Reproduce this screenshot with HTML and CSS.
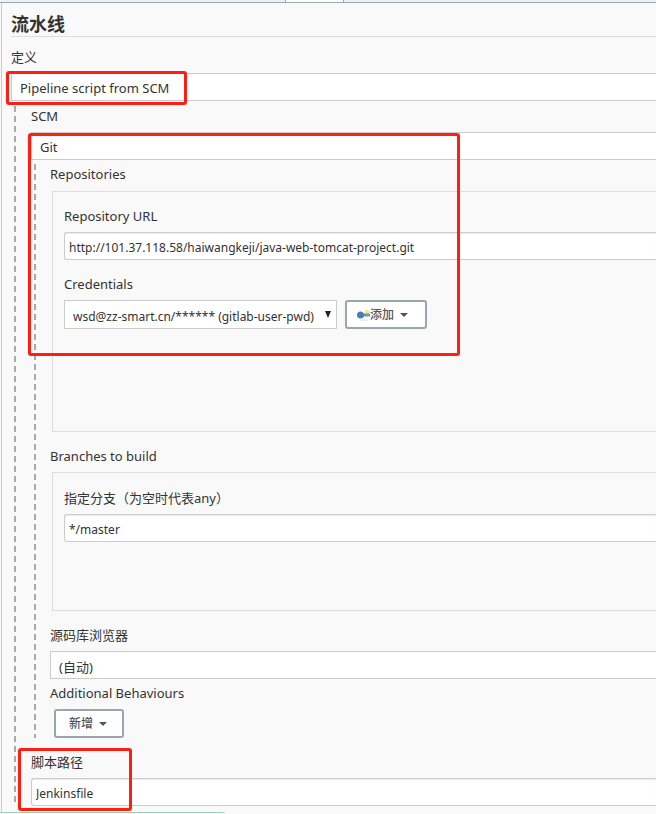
FILE: index.html
```html
<!DOCTYPE html>
<html lang="zh-CN">
<head>
    <meta charset="UTF-8">
    <meta name="viewport" content="width=device-width, initial-scale=1.0">
    <title>流水线</title>
    <link rel="stylesheet" href="styles.css">
</head>
<body>
    <div class="tab-bar">
        <div class="tab active"></div>
    </div>
    <form class="panel">
        <h2>流水线</h2>
        <label class="first" for="definition">定义</label>
        <select id="definition">
            <option>Pipeline script from SCM</option>
        </select>
        <div class="nested">
            <label for="scm">SCM</label>
            <select id="scm">
                <option>Git</option>
            </select>
            <div class="nested inner">
                <h3>Repositories</h3>
                <div class="group repositories">
                    <label for="repo-url">Repository URL</label>
                    <input type="text" id="repo-url" value="http://101.37.118.58/haiwangkeji/java-web-tomcat-project.git">
                    <label class="spaced" for="credentials">Credentials</label>
                    <div class="credentials-row">
                        <div class="select-box">
                            <select id="credentials">
                                <option>wsd@zz-smart.cn/****** (gitlab-user-pwd)</option>
                            </select>
                            <svg class="arrow" width="6" height="7" viewBox="0 0 6 7"><path d="M0 0h6L3 7z" fill="#222"/></svg>
                        </div>
                        <button type="button" class="add">
                            <svg width="13" height="14" viewBox="0 0 13 14">
                                <ellipse cx="7" cy="12" rx="5" ry="1" fill="#eceef0"/>
                                <circle cx="10" cy="4" r="2.500" fill="#f5ee70"/>
                                <path d="M5 5.500h8v3H5z" fill="#6f98c8"/>
                                <circle cx="3.500" cy="7" r="3.500" fill="#4a7cb8"/>
                            </svg>
                            <span>添加</span>
                            <svg class="caret" width="8" height="4" viewBox="0 0 8 4"><path d="M0 0h8L4 4z" fill="#4d545d"/></svg>
                        </button>
                    </div>
                </div>
                <h3 class="spaced">Branches to build</h3>
                <div class="group branches">
                    <label for="branch">指定分支（为空时代表any）</label>
                    <input type="text" id="branch" value="*/master">
                </div>
                <label class="spaced" for="browser">源码库浏览器</label>
                <select id="browser" class="low">
                    <option>(自动)</option>
                </select>
                <h3>Additional Behaviours</h3>
                <button type="button" class="new">
                    <span>新增</span>
                    <svg class="caret" width="8" height="4" viewBox="0 0 8 4"><path d="M0 0h8L4 4z" fill="#4d545d"/></svg>
                </button>
            </div>
            <label class="spaced" for="script-path">脚本路径</label>
            <input type="text" id="script-path" value="Jenkinsfile">
        </div>
    </form>

    <!-- highlights drawn over the form -->
    <div class="mark mark-definition"></div>
    <div class="mark mark-git"></div>
    <div class="mark mark-script"></div>
    <div class="status"></div>
</body>
</html>
```

FILE: styles.css
```css
* {
    box-sizing: border-box;
}
body {
    position: relative;
    margin: 0;
    overflow: hidden;
    background-color: #f9f9f9;
    color: #333;
    font-family: "Noto Sans", "Noto Sans CJK SC", sans-serif;
    font-size: 13px;
    line-height: 20px;
}
.tab-bar {
    display: flex;
    height: 3px;
    padding-left: 285px;
    background-color: #eaf0f3;
    border-bottom: 1px solid #98a6ad;
}
.tab {
    width: 59px;
    border: 1px solid #98a6ad;
    border-width: 0 1px;
    background-color: white;
}
.panel {
    margin-left: 1px;
    padding: 10px 0 8px 9px;
    border-left: 1px solid #ccc;
}
h2 {
    margin: 0;
    border-bottom: 1px solid #ddd;
    font-size: 18px;
    line-height: 23px;
}
label, h3 {
    display: block;
    margin: 0;
    padding: 4px 0 6px;
    font-size: 13px;
    font-weight: normal;
}
.first {
    margin-top: 6px;
}
.spaced {
    margin-top: 10px;
}
input, select {
    display: block;
    width: 100%;
    height: 28px;
    border: 1px solid #ccc;
    border-right: none;
    border-radius: 0;
    background-color: white;
    color: #333;
    font: inherit;
}
input {
    padding: 2px 4px 0;
    border-radius: 3px 0 0 3px;
    box-shadow: inset 0 1px 1px rgba(0, 0, 0, 0.08);
    font-size: 12px;
}
select {
    appearance: none;
    padding: 2px 8px 0;
}
select.low {
    padding-top: 4px;
}
.nested {
    margin-top: 1px;
    margin-left: 3px;
    padding-left: 17px;
    background: repeating-linear-gradient(transparent 0 4px, #aaa 4px 10px) left top / 2px 100% no-repeat;
}
.inner {
    margin-top: 0;
    padding-left: 16px;
}
.group {
    margin-left: 2px;
    padding-left: 11px;
    border: 1px solid #ddd;
    border-right: none;
}
.repositories {
    margin-top: 1px;
    padding-top: 10px;
    padding-bottom: 102px;
}
.branches {
    padding-top: 11px;
    padding-bottom: 68px;
}
.credentials-row {
    display: flex;
    gap: 8px;
}
.select-box {
    display: grid;
    width: 273px;
}
.select-box select, .select-box .arrow {
    grid-area: 1 / 1;
}
.select-box select {
    height: 29px;
    padding-top: 4px;
    border-right: 1px solid #ccc;
    font-size: 12px;
}
.arrow {
    margin: 11px 6px;
    justify-self: end;
    pointer-events: none;
}
button {
    display: flex;
    align-items: center;
    height: 29px;
    padding: 0 10px;
    border: 2px solid #98a6ad;
    border-radius: 3px;
    background-color: white;
    color: #4d545d;
    font: inherit;
    font-size: 12px;
    font-weight: 500;
}
.add {
    width: 82px;
}
.new {
    width: 70px;
    margin-left: 4px;
    padding-left: 13px;
}
.caret {
    margin-left: 6px;
}
.mark {
    position: absolute;
    border: 3px solid #ff1f12;
    border-radius: 3px;
    pointer-events: none;
}
.mark-definition {
    top: 71px;
    left: 6px;
    width: 181px;
    height: 34px;
}
.mark-git {
    top: 133px;
    left: 28px;
    width: 432px;
    height: 223px;
}
.mark-script {
    top: 748px;
    left: 18px;
    width: 114px;
    height: 63px;
}
.status {
    position: fixed;
    bottom: 0;
    left: 0;
    width: 225px;
    height: 2px;
    border-top: 1px solid #a5cfb5;
    border-top-right-radius: 3px;
    background-color: #f9f9f9;
}
```
